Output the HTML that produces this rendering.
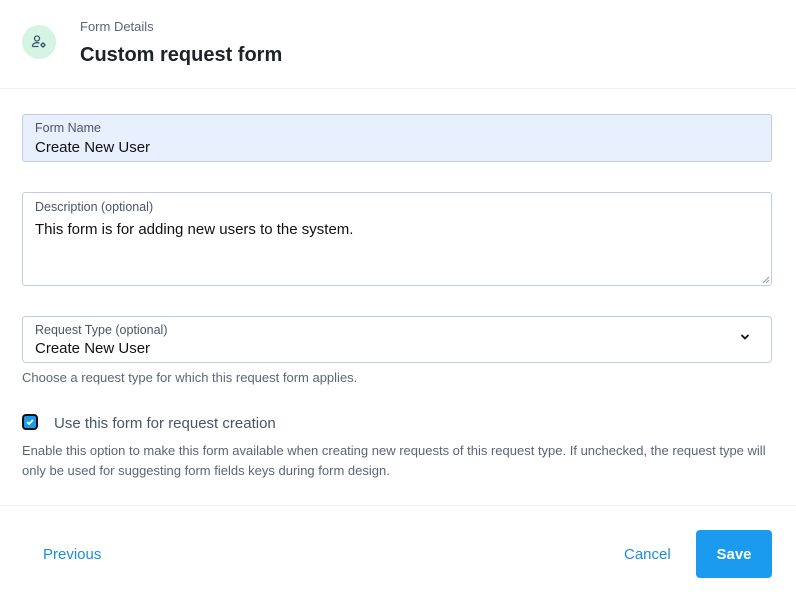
<!DOCTYPE html>
<html><head><style>
*{box-sizing:border-box;margin:0;padding:0}
body{width:796px;height:599px;background:#fff;font-family:"Liberation Sans",sans-serif;position:relative;overflow:hidden;color:#1f2328}
.abs{position:absolute}
.lbl{font-size:12.5px;color:#4a5568}
.val{font-size:15px;color:#111}
.help{font-size:13px;color:#5a6677}
</style></head><body>
<div class="abs" style="left:22px;top:25px;width:34px;height:34px;border-radius:50%;background:#d5f4e4"></div>
<svg class="abs" style="left:31px;top:34px" width="16" height="16" viewBox="0 0 16 16" fill="none" stroke="#3d5566" stroke-width="1.3"><circle cx="6" cy="4.5" r="2.5"/><path d="M1.5 12.5c0-2.5 2-3.8 4.5-3.8 1 0 1.8.2 2.4.5M1.5 12.5h6"/><circle cx="12" cy="11" r="1.6"/><path d="M12 8.3v1M12 12.7v1M9.3 11h1M13.7 11h1"/></svg>
<div class="abs" style="left:80px;top:19px;font-size:13px;color:#5a6677">Form Details</div>
<div class="abs" style="left:80px;top:44px;font-size:20px;font-weight:bold;color:#1f2328">Custom request form</div>
<div class="abs" style="left:0;top:88px;width:796px;height:1px;background:#edf0f3"></div>

<div class="abs" style="left:22px;top:114px;width:750px;height:48px;background:#e8f0fe;border:1px solid #c3cdd8;border-radius:3px"></div>
<div class="abs lbl" style="left:35px;top:121px">Form Name</div>
<div class="abs val" style="left:35px;top:139px">Create New User</div>

<div class="abs" style="left:22px;top:192px;width:750px;height:94px;border:1px solid #c3cdd8;border-radius:3px"></div>
<div class="abs lbl" style="left:35px;top:200px">Description (optional)</div>
<div class="abs val" style="left:35px;top:221px">This form is for adding new users to the system.</div>
<svg class="abs" style="left:762px;top:276px" width="8" height="8"><path d="M1 7L7 1M4 7L7 4" stroke="#999" stroke-width="1"/></svg>

<div class="abs" style="left:22px;top:316px;width:750px;height:47px;border:1px solid #c3cdd8;border-radius:4px"></div>
<div class="abs lbl" style="left:35px;top:323px">Request Type (optional)</div>
<div class="abs val" style="left:35px;top:340px">Create New User</div>
<svg class="abs" style="left:740px;top:333px" width="10" height="8"><path d="M1.5 2l3.5 3.5L8.5 2" stroke="#111" stroke-width="1.8" fill="none"/></svg>
<div class="abs help" style="left:22px;top:370px">Choose a request type for which this request form applies.</div>

<div class="abs" style="left:22px;top:414px;width:16px;height:16px;border-radius:4px;background:#1a9bf0;border:2px solid #111"></div>
<svg class="abs" style="left:25px;top:417px" width="10" height="10"><path d="M2 5l2 2 4-4" stroke="#fff" stroke-width="1.8" fill="none"/></svg>
<div class="abs" style="left:54px;top:415px;font-size:15px;color:#4a5568">Use this form for request creation</div>
<div class="abs help" style="left:22px;top:441px;width:774px;line-height:20px;white-space:nowrap">Enable this option to make this form available when creating new requests of this request type. If unchecked, the request type will<br>only be used for suggesting form fields keys during form design.</div>

<div class="abs" style="left:0;top:505px;width:796px;height:1px;background:#edf0f3"></div>
<div class="abs" style="left:43px;top:546px;font-size:15px;color:#1a8fe0">Previous</div>
<div class="abs" style="left:624px;top:546px;font-size:15px;color:#1a8fe0">Cancel</div>
<div class="abs" style="left:696px;top:530px;width:76px;height:48px;background:#1a9bf0;border-radius:4px;color:#fff;font-size:15px;font-weight:bold;text-align:center;line-height:49px">Save</div>
</body></html>
